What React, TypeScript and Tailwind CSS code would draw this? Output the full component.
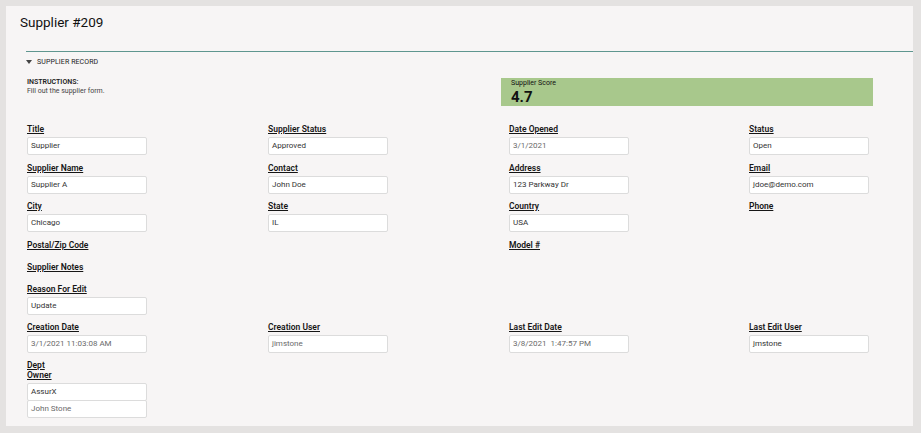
const font = { fontFamily: "Roboto, 'Liberation Sans', sans-serif" };

type Cell = {
  label?: string[];
  value?: string;
  muted?: boolean;
};

const rows: { cells: Cell[]; labelOnly?: boolean }[] = [
  {
    cells: [
      { label: ["Title"], value: "Supplier" },
      { label: ["Supplier Status"], value: "Approved" },
      { label: ["Date Opened"], value: "3/1/2021", muted: true },
      { label: ["Status"], value: "Open" },
    ],
  },
  {
    cells: [
      { label: ["Supplier Name"], value: "Supplier A" },
      { label: ["Contact"], value: "John Doe" },
      { label: ["Address"], value: "123 Parkway Dr" },
      { label: ["Email"], value: "jdoe@demo.com" },
    ],
  },
  {
    cells: [
      { label: ["City"], value: "Chicago" },
      { label: ["State"], value: "IL" },
      { label: ["Country"], value: "USA" },
      { label: ["Phone"] },
    ],
  },
  {
    labelOnly: true,
    cells: [{ label: ["Postal/Zip Code"] }, {}, { label: ["Model #"] }, {}],
  },
  { labelOnly: true, cells: [{ label: ["Supplier Notes"] }, {}, {}, {}] },
  {
    cells: [{ label: ["Reason For Edit"], value: "Update" }, {}, {}, {}],
  },
  {
    cells: [
      { label: ["Creation Date"], value: "3/1/2021 11:03:08 AM", muted: true },
      { label: ["Creation User"], value: "jimstone", muted: true },
      { label: ["Last Edit Date"], value: "3/8/2021  1:47:57 PM", muted: true },
      { label: ["Last Edit User"], value: "jmstone" },
    ],
  },
];

function Input({ value, muted, className = "" }: { value: string; muted?: boolean; className?: string }) {
  return (
    <div
      className={`h-[18px] w-[120px] border border-[#dcdcdc] bg-white rounded-[2px] pl-[3px] flex items-center text-[8px] whitespace-pre ${
        muted ? "text-[#6a6a6a]" : "text-[#333]"
      } ${className}`}
    >
      {value}
    </div>
  );
}

function Field({ cell }: { cell: Cell }) {
  if (!cell.label) return <div />;
  return (
    <div>
      <div className="text-[8.5px] leading-[12px] h-[12px] font-semibold underline text-[#161616]">
        {cell.label[0]}
      </div>
      {cell.value && <Input value={cell.value} muted={cell.muted} className="mt-[2px]" />}
    </div>
  );
}

export default function App() {
  return (
    <div className="min-h-screen bg-[#e4e2e1] pt-[6px]" style={font}>
      <div className="ml-[6px] mr-[8px] h-[420px] bg-[#f7f5f5] pt-[6px]">
        {/* Header */}
        <h1 className="pl-[14px] text-[13.5px] leading-[20px] text-[#111]">Supplier #209</h1>

        <section className="ml-[20px] mt-[19px] border-t border-[#5f968f]">
          <div className="flex items-center gap-[5px] h-[10px] mt-[5px] text-[7px] text-[#222] tracking-[0.1px]">
            <svg width="6" height="4" viewBox="0 0 6 4" className="fill-[#444]">
              <path d="M0 0h6L3 4z" />
            </svg>
            SUPPLIER RECORD
          </div>

          {/* Instructions + score */}
          <div className="flex mt-[11px] pl-[1px]">
            <div className="w-[474px] text-[#222]">
              <div className="text-[7px] leading-[9px] font-semibold">INSTRUCTIONS:</div>
              <div className="text-[7px] leading-[9px] text-[#444]">Fill out the supplier form.</div>
            </div>
            <div className="w-[372px] h-[28px] bg-[#a8c88c] px-[10px] pt-[1px] text-[#111]">
              <div className="text-[7px] leading-[9px]">Supplier Score</div>
              <div className="text-[15px] leading-[16px] font-bold mt-[1px]">4.7</div>
            </div>
          </div>

          {/* Fields */}
          <div className="mt-[17px] pl-[1px]">
            {rows.map((row, i) => (
              <div
                key={i}
                className={`grid grid-cols-[241px_241px_240px_1fr] ${row.labelOnly ? "mb-[10px]" : "mb-[6.5px]"}`}
              >
                {row.cells.map((cell, j) => (
                  <Field key={j} cell={cell} />
                ))}
              </div>
            ))}

            <div>
              <div className="text-[8.5px] leading-[10px] font-semibold underline text-[#161616]">
                <div>Dept</div>
                <div>Owner</div>
              </div>
              <Input value="AssurX" className="mt-[3px]" />
              <Input value="John Stone" muted className="-mt-px" />
            </div>
          </div>
        </section>
      </div>
    </div>
  );
}
